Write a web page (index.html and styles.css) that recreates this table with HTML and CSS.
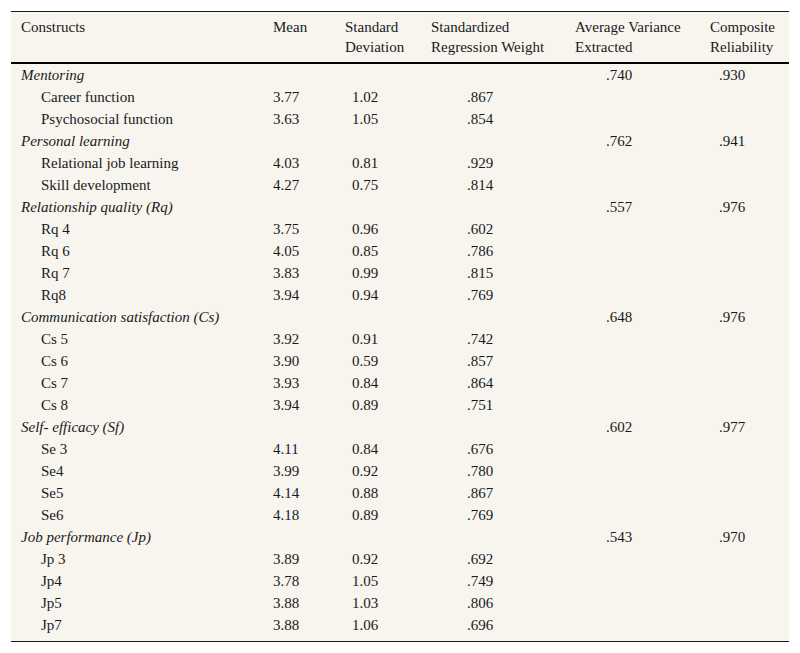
FILE: index.html
```html
<!DOCTYPE html>
<html>
<head>
<meta charset="utf-8">
<link rel="stylesheet" href="styles.css">
</head>
<body>
<div class="wrap">
<table class="tbl">
<thead>
<tr>
<th class="c1">Constructs</th>
<th class="c2">Mean</th>
<th class="c3">Standard<br>Deviation</th>
<th class="c4">Standardized<br>Regression Weight</th>
<th class="c5">Average Variance<br>Extracted</th>
<th class="c6">Composite<br>Reliability</th>
</tr>
</thead>
<tbody>
<tr class="grp"><td class="c1">Mentoring</td><td></td><td></td><td></td><td class="c5">.740</td><td class="c6">.930</td></tr>
<tr><td class="c1 sub">Career function</td><td class="c2">3.77</td><td class="c3">1.02</td><td class="c4">.867</td><td></td><td></td></tr>
<tr><td class="c1 sub">Psychosocial function</td><td class="c2">3.63</td><td class="c3">1.05</td><td class="c4">.854</td><td></td><td></td></tr>
<tr class="grp"><td class="c1">Personal learning</td><td></td><td></td><td></td><td class="c5">.762</td><td class="c6">.941</td></tr>
<tr><td class="c1 sub">Relational job learning</td><td class="c2">4.03</td><td class="c3">0.81</td><td class="c4">.929</td><td></td><td></td></tr>
<tr><td class="c1 sub">Skill development</td><td class="c2">4.27</td><td class="c3">0.75</td><td class="c4">.814</td><td></td><td></td></tr>
<tr class="grp"><td class="c1">Relationship quality (Rq)</td><td></td><td></td><td></td><td class="c5">.557</td><td class="c6">.976</td></tr>
<tr><td class="c1 sub">Rq 4</td><td class="c2">3.75</td><td class="c3">0.96</td><td class="c4">.602</td><td></td><td></td></tr>
<tr><td class="c1 sub">Rq 6</td><td class="c2">4.05</td><td class="c3">0.85</td><td class="c4">.786</td><td></td><td></td></tr>
<tr><td class="c1 sub">Rq 7</td><td class="c2">3.83</td><td class="c3">0.99</td><td class="c4">.815</td><td></td><td></td></tr>
<tr><td class="c1 sub">Rq8</td><td class="c2">3.94</td><td class="c3">0.94</td><td class="c4">.769</td><td></td><td></td></tr>
<tr class="grp"><td class="c1">Communication satisfaction (Cs)</td><td></td><td></td><td></td><td class="c5">.648</td><td class="c6">.976</td></tr>
<tr><td class="c1 sub">Cs 5</td><td class="c2">3.92</td><td class="c3">0.91</td><td class="c4">.742</td><td></td><td></td></tr>
<tr><td class="c1 sub">Cs 6</td><td class="c2">3.90</td><td class="c3">0.59</td><td class="c4">.857</td><td></td><td></td></tr>
<tr><td class="c1 sub">Cs 7</td><td class="c2">3.93</td><td class="c3">0.84</td><td class="c4">.864</td><td></td><td></td></tr>
<tr><td class="c1 sub">Cs 8</td><td class="c2">3.94</td><td class="c3">0.89</td><td class="c4">.751</td><td></td><td></td></tr>
<tr class="grp"><td class="c1">Self- efficacy (Sf)</td><td></td><td></td><td></td><td class="c5">.602</td><td class="c6">.977</td></tr>
<tr><td class="c1 sub">Se 3</td><td class="c2">4.11</td><td class="c3">0.84</td><td class="c4">.676</td><td></td><td></td></tr>
<tr><td class="c1 sub">Se4</td><td class="c2">3.99</td><td class="c3">0.92</td><td class="c4">.780</td><td></td><td></td></tr>
<tr><td class="c1 sub">Se5</td><td class="c2">4.14</td><td class="c3">0.88</td><td class="c4">.867</td><td></td><td></td></tr>
<tr><td class="c1 sub">Se6</td><td class="c2">4.18</td><td class="c3">0.89</td><td class="c4">.769</td><td></td><td></td></tr>
<tr class="grp"><td class="c1">Job performance (Jp)</td><td></td><td></td><td></td><td class="c5">.543</td><td class="c6">.970</td></tr>
<tr><td class="c1 sub">Jp 3</td><td class="c2">3.89</td><td class="c3">0.92</td><td class="c4">.692</td><td></td><td></td></tr>
<tr><td class="c1 sub">Jp4</td><td class="c2">3.78</td><td class="c3">1.05</td><td class="c4">.749</td><td></td><td></td></tr>
<tr><td class="c1 sub">Jp5</td><td class="c2">3.88</td><td class="c3">1.03</td><td class="c4">.806</td><td></td><td></td></tr>
<tr class="last"><td class="c1 sub">Jp7</td><td class="c2">3.88</td><td class="c3">1.06</td><td class="c4">.696</td><td></td><td></td></tr>
</tbody>
</table>
</div>
</body>
</html>
```
FILE: styles.css
```css
html, body {
  margin: 0;
  padding: 0;
  background: #ffffff;
}
.wrap {
  padding: 11px 11px 0 11px;
}
.tbl {
  width: 778px;
  border-collapse: collapse;
  table-layout: fixed;
  background: #f8f5ef;
  font-family: "Liberation Serif", "Times New Roman", serif;
  font-size: 15px;
  color: #1a1a1a;
  border-top: 1px solid #1a1a1a;
  border-bottom: 1px solid #1a1a1a;
}
.tbl th {
  font-weight: normal;
  text-align: left;
  vertical-align: top;
  line-height: 20px;
  padding: 5px 0 5px 10px;
  border-bottom: 2px solid #000;
}
.tbl td {
  text-align: left;
  line-height: 22px;
  padding: 0;
  white-space: nowrap;
}
.tbl th.c1 { width: 242px; }
.tbl th.c2 { width: 62px; }
.tbl th.c3 { width: 76px; }
.tbl th.c4 { width: 134px; }
.tbl th.c5 { width: 125px; }
.tbl td.c1 { padding-left: 10px; }
.tbl td.c1.sub { padding-left: 30px; }
.grp td.c1 { font-style: italic; }
.tbl td.c2 { padding-left: 10px; }
.tbl td.c3 { padding-left: 17px; }
.tbl td.c4 { padding-left: 46px; }
.tbl td.c5 { padding-left: 41px; }
.tbl td.c6 { padding-left: 19px; }
.last td { padding-bottom: 5px; }
```
